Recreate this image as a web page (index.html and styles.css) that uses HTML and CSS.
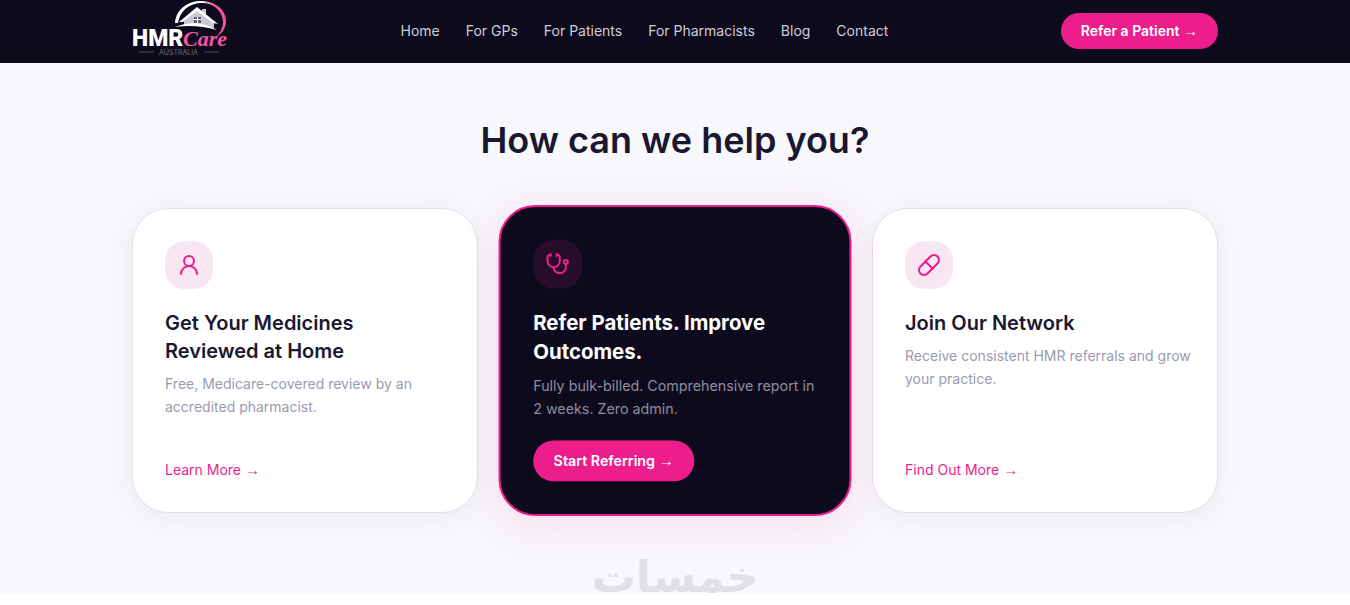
FILE: index.html
```html
<!DOCTYPE html>
<html lang="en">
<head>
    <meta charset="utf-8">
    <meta name="viewport" content="width=device-width, initial-scale=1">
    <title>HMR Care Australia</title>
    <link rel="stylesheet" href="styles.css">
</head>
<body>
<header class="site-header">
    <div class="container header-inner">
        <a class="logo" href="#" aria-label="HMR Care Australia">
            <svg width="96" height="56" viewBox="0 0 96 56">
                <!-- swoosh -->
                <path d="M43 23C44 9 56 1 69 1C77 1 83 4 87 8C82 5 76 3 70 3C57 3 48 11 46 23Z" fill="#fff"/>
                <path d="M72 2C85 2 94 11 94 21C94 28 90 34 84 37C89 32 91 27 91 22C91 13 84 5 72 2Z" fill="#f9549f"/>
                <!-- house -->
                <path d="M52 21L65 10L70 13V9H74V15L82 22V28C72 24 62 24 52 25Z" fill="#c9c9d4"/>
                <path d="M47 22L65 7L86 24L81 23L65 11L51 22Z" fill="#fff"/>
                <path d="M62 17H69V23H62Z" fill="#5b5c6c"/>
                <path d="M65 17H66V23H65ZM62 19H69V20H62Z" fill="#fff"/>
                <path d="M43 27C56 21 73 22 85 30C71 26 57 25 43 27Z" fill="#fff"/>
                <text class="logo-hmr" x="0" y="46">HMR</text>
                <text class="logo-care" x="51" y="46">Care</text>
                <path d="M7 52H22M72 52H87" stroke="#4b4a58"/>
                <text class="logo-country" x="27" y="55">AUSTRALIA</text>
            </svg>
        </a>
        <nav class="main-nav">
            <a href="#">Home</a>
            <a href="#">For GPs</a>
            <a href="#">For Patients</a>
            <a href="#">For Pharmacists</a>
            <a href="#">Blog</a>
            <a href="#">Contact</a>
        </nav>
        <a class="btn btn-small" href="#">Refer a Patient <span class="arrow">→</span></a>
    </div>
</header>

<section class="help">
    <div class="container">
        <h2>How can we help you?</h2>
        <div class="cards">
            <article class="card">
                <div class="card-icon">
                    <svg viewBox="0 0 24 24">
                        <circle cx="12" cy="8" r="5"/>
                        <path d="M20 21a8 8 0 0 0-16 0"/>
                    </svg>
                </div>
                <h3>Get Your Medicines Reviewed at Home</h3>
                <p>Free, Medicare-covered review by an accredited pharmacist.</p>
                <a class="card-link" href="#">Learn More <span class="arrow">→</span></a>
            </article>
            <article class="card card-featured">
                <div class="card-icon">
                    <svg viewBox="0 0 24 24">
                        <path d="M11 2v2M5 2v2"/>
                        <path d="M5 3H4a2 2 0 0 0-2 2v4a6 6 0 0 0 12 0V5a2 2 0 0 0-2-2h-1"/>
                        <path d="M8 15a6 6 0 0 0 12 0v-3"/>
                        <circle cx="20" cy="10" r="2"/>
                    </svg>
                </div>
                <h3>Refer Patients. Improve Outcomes.</h3>
                <p>Fully bulk-billed. Comprehensive report in 2 weeks. Zero admin.</p>
                <a class="btn" href="#">Start Referring <span class="arrow">→</span></a>
            </article>
            <article class="card">
                <div class="card-icon">
                    <svg viewBox="0 0 24 24">
                        <path d="m10.5 20.5 10-10a4.95 4.95 0 1 0-7-7l-10 10a4.95 4.95 0 1 0 7 7Z"/>
                        <path d="m8.5 8.5 7 7"/>
                    </svg>
                </div>
                <h3>Join Our Network</h3>
                <p>Receive consistent HMR referrals and grow your practice.</p>
                <a class="card-link" href="#">Find Out More <span class="arrow">→</span></a>
            </article>
        </div>
        <div class="watermark" lang="ar" dir="rtl">خمسات</div>
    </div>
</section>
</body>
</html>
```
FILE: styles.css
```css
* {
    box-sizing: border-box;
}

body {
    margin: 0;
    font-family: Inter, "Open Sans", sans-serif;
    font-size: 14px;
    color: #1a1730;
    background-color: #fff;
}

a {
    text-decoration: none;
}

.container {
    max-width: 1150px;
    margin: 0 auto;
    padding: 0 32px;
}

.site-header {
    background-color: #0d0a1e;
}

.header-inner {
    display: flex;
    align-items: center;
    justify-content: space-between;
    min-height: 63px;
    padding-bottom: 2px;
}

.logo svg {
    display: block;
    margin-bottom: 5px;
    overflow: visible;
}

.logo-hmr {
    font-family: Roboto, sans-serif;
    font-size: 23px;
    font-weight: 900;
    fill: #fff;
}

.logo-care {
    font-family: "Liberation Serif", serif;
    font-size: 22px;
    font-weight: bold;
    font-style: italic;
    fill: #f9549f;
}

.logo-country {
    font-size: 7px;
    fill: #6b6a78;
}

.main-nav {
    display: flex;
    gap: 26px;
}

.main-nav a {
    color: #cfced4;
}

.btn {
    align-self: flex-start;
    padding: 0 20px;
    border-radius: 20px;
    background-color: #eb1e8c;
    color: #fff;
    font-weight: 600;
    line-height: 40px;
}

.btn-small {
    align-self: center;
    line-height: 36px;
}

.arrow {
    font-family: "Liberation Serif", serif;
    font-size: 15px;
    font-weight: normal;
    line-height: 1;
}

.help {
    background-color: #f8f7fc;
}

.help h2 {
    margin: 0;
    padding: 53px 0 44px;
    font-size: 36px;
    font-weight: 600;
    line-height: 48px;
    text-align: center;
}

.cards {
    display: grid;
    grid-template-columns: repeat(3, 1fr);
    gap: 24px;
}

.card {
    display: flex;
    flex-direction: column;
    padding: 32px 24px 32px 32px;
    border: 1px solid #e1dfeb;
    border-radius: 36px;
    background-color: #fff;
    box-shadow: 0 4px 24px rgba(13, 10, 30, 0.06);
}

.card-icon {
    display: flex;
    align-items: center;
    justify-content: center;
    width: 48px;
    height: 48px;
    margin-bottom: 20px;
    border-radius: 20px;
    background-color: #f9e6f3;
}

.card-icon svg {
    width: 24px;
    height: 24px;
    fill: none;
    stroke: #eb1e8c;
    stroke-width: 2;
    stroke-linecap: round;
    stroke-linejoin: round;
}

.card h3 {
    margin: 0 0 7px;
    padding-right: 8px;
    font-size: 20px;
    font-weight: 600;
    line-height: 28px;
}

.card p {
    margin: 0 0 20px;
    color: #9b9aaf;
    line-height: 23px;
}

.card-link {
    margin-top: auto;
    color: #eb1e8c;
    line-height: 20px;
}

.card-featured {
    border: 2px solid #eb1e8c;
    background-color: #0d0a1e;
    box-shadow: 0 8px 40px rgba(235, 30, 140, 0.12);
    transform: scale(1.02);
}

.card-featured .card-icon {
    background-color: #260d2a;
}

.card-featured h3 {
    color: #fff;
    font-weight: 700;
}

.card-featured p {
    color: #8f8d9b;
}

.watermark {
    height: 40px;
    margin-top: 40px;
    font-family: "DejaVu Sans", sans-serif;
    font-size: 44px;
    font-weight: bold;
    line-height: 48px;
    text-align: center;
    color: #e1e0e5;
}
```
